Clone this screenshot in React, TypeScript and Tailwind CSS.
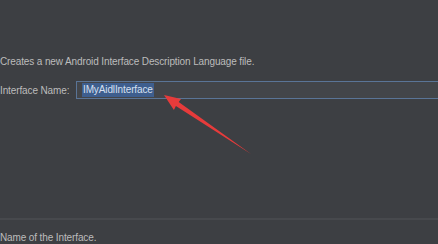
import React from 'react';

export default function App() {
  return (
    <div className="relative w-[438px] h-[244px] overflow-hidden bg-[#3d3f43] font-['Liberation_Sans',sans-serif] text-[10px] tracking-[-0.12px] text-[#bcbcbc] flex flex-col">
      {/* description */}
      <p className="mt-[55px] leading-[14px] whitespace-nowrap">Creates a new Android Interface Description Language file.</p>

      {/* name field row */}
      <div className="mt-[12px] flex items-center h-[18px]">
        <span className="w-[76px] shrink-0 whitespace-nowrap">Interface Name:</span>
        <div className="flex-1 h-[18px] -mr-px border border-[#5a7496] bg-[#434549] flex items-center pl-[5px]">
          <span className="bg-[#3e5e8e] text-[#d6e0f0] leading-[14px] px-px whitespace-nowrap">IMyAidlInterface</span>
        </div>
      </div>

      <div className="mt-auto border-t-2 border-[#47494d]" />
      <p className="mt-[12px] leading-[12px] whitespace-nowrap">Name of the Interface.</p>

      {/* red annotation arrow */}
      <svg className="absolute left-0 top-0" width="438" height="244" viewBox="0 0 438 244">
        <polygon
          points="164,95 181,99 178.7,102 251,154 175.9,106 173.9,110"
          fill="#e63b3b"
        />
      </svg>
    </div>
  );
}
